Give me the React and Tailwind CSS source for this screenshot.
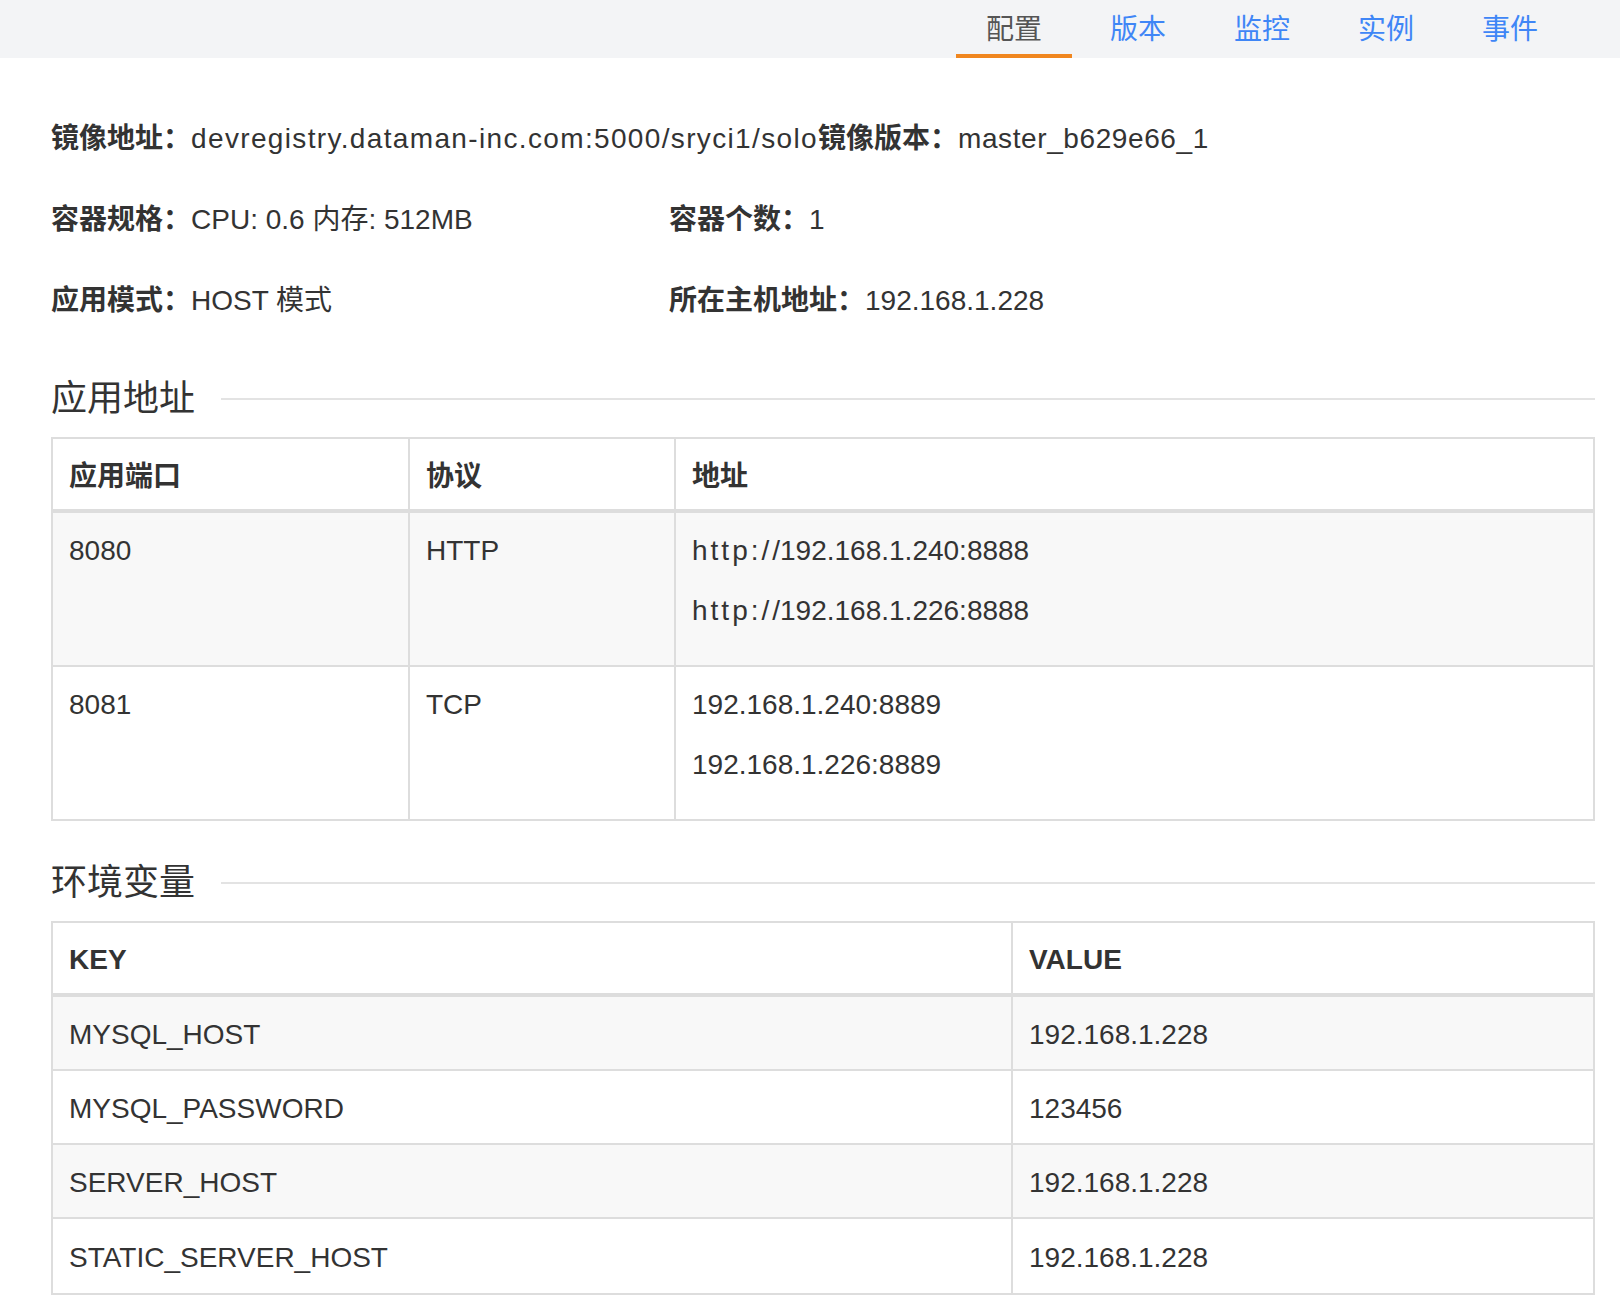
import React from 'react';

const tabs = ['配置', '版本', '监控', '实例', '事件'];

const ports = [
  { port: '8080', proto: 'HTTP', addrs: ['192.168.1.240:8888', '192.168.1.226:8888'], http: true },
  { port: '8081', proto: 'TCP', addrs: ['192.168.1.240:8889', '192.168.1.226:8889'] },
];

const envs = [
  ['MYSQL_HOST', '192.168.1.228'],
  ['MYSQL_PASSWORD', '123456'],
  ['SERVER_HOST', '192.168.1.228'],
  ['STATIC_SERVER_HOST', '192.168.1.228'],
];

const Info = ({ label, value, wide, valueClass = '' }) => (
  <div className={`flex ${wide ? 'min-w-[618px]' : ''}`}>
    <span className="font-bold">{label}：</span>
    <span className={valueClass}>{value}</span>
  </div>
);

const SectionTitle = ({ children, className = '' }) => (
  <div className={`flex items-center h-[50px] ${className}`}>
    <h2 className="text-[36px] leading-[50px] text-[#333]">{children}</h2>
    <div className="flex-1 h-[2px] bg-[#e3e3e3] ml-[26px]" />
  </div>
);

export default function App() {
  return (
    <div className="min-h-screen bg-white text-[#333] font-['Liberation_Sans','Noto_Sans_CJK_SC',sans-serif]">
      {/* tab bar */}
      <div className="h-[58px] bg-[#f3f4f6] flex justify-end pr-[52px] gap-[8px]">
        {tabs.map((t, i) => (
          <div
            key={t}
            className={`w-[116px] h-full flex items-center justify-center pt-[6px] text-[28px] border-b-4 ${
              i === 0 ? 'border-[#f0861f] text-[#555]' : 'border-transparent text-[#3f86f6]'
            }`}
          >
            {t}
          </div>
        ))}
      </div>

      <div className="pl-[51px] pr-[25px] pt-[61px] pb-[15px]">
        {/* basic info */}
        <div className="text-[28px] leading-[40px]">
          <div className="flex h-[40px] mb-[41px]">
            <Info label="镜像地址" value="devregistry.dataman-inc.com:5000/sryci1/solo" valueClass="tracking-[1.35px]" />
            <Info label="镜像版本" value="master_b629e66_1" valueClass="tracking-[0.6px]" />
          </div>
          <div className="flex h-[40px] mb-[41px]">
            <Info wide label="容器规格" value="CPU: 0.6 内存: 512MB" />
            <Info label="容器个数" value="1" />
          </div>
          <div className="flex h-[40px]">
            <Info wide label="应用模式" value="HOST 模式" />
            <Info label="所在主机地址" value="192.168.1.228" />
          </div>
        </div>

        {/* app address */}
        <SectionTitle className="mt-[53px]">应用地址</SectionTitle>
        <div className="mt-[13px] border-2 border-[#ddd] text-[28px] leading-[40px]">
          <div className="flex h-[74px] border-b-4 border-[#ddd] font-bold">
            <div className="w-[357px] border-r-2 border-[#ddd] px-4 pt-[6px] flex items-center">应用端口</div>
            <div className="w-[266px] border-r-2 border-[#ddd] px-4 pt-[6px] flex items-center">协议</div>
            <div className="flex-1 px-4 pt-[6px] flex items-center">地址</div>
          </div>
          {ports.map((p, i) => (
            <div
              key={p.port}
              className={`flex ${i === 0 ? 'bg-[#f8f8f8] border-b-2 border-[#ddd]' : 'bg-white'}`}
            >
              <div className="w-[357px] border-r-2 border-[#ddd] px-4 pt-[18px]">{p.port}</div>
              <div className="w-[266px] border-r-2 border-[#ddd] px-4 pt-[18px]">{p.proto}</div>
              <div className="flex-1 px-4 pt-[18px] pb-[14px]">
                {p.addrs.map(a => (
                  <div key={a} className="mb-[20px]">
                    {p.http && (
                      <>
                        <span className="tracking-[3px]">http:/</span>/
                      </>
                    )}
                    {a}
                  </div>
                ))}
              </div>
            </div>
          ))}
        </div>

        {/* env vars */}
        <SectionTitle className="mt-[37px]">环境变量</SectionTitle>
        <div className="mt-[13px] border-2 border-[#ddd] text-[28px] leading-[40px]">
          <div className="flex h-[74px] border-b-4 border-[#ddd] font-bold">
            <div className="w-[960px] border-r-2 border-[#ddd] px-4 pt-[4px] flex items-center">KEY</div>
            <div className="flex-1 px-4 pt-[4px] flex items-center">VALUE</div>
          </div>
          {envs.map(([k, v], i) => (
            <div
              key={k}
              className={`flex h-[74px] ${i % 2 === 0 ? 'bg-[#f8f8f8]' : 'bg-white'} ${
                i < envs.length - 1 ? 'border-b-2 border-[#ddd]' : 'h-[72px]'
              }`}
            >
              <div className="w-[960px] border-r-2 border-[#ddd] px-4 pt-[4px] flex items-center">{k}</div>
              <div className="flex-1 px-4 pt-[4px] flex items-center">{v}</div>
            </div>
          ))}
        </div>
      </div>
    </div>
  );
}
